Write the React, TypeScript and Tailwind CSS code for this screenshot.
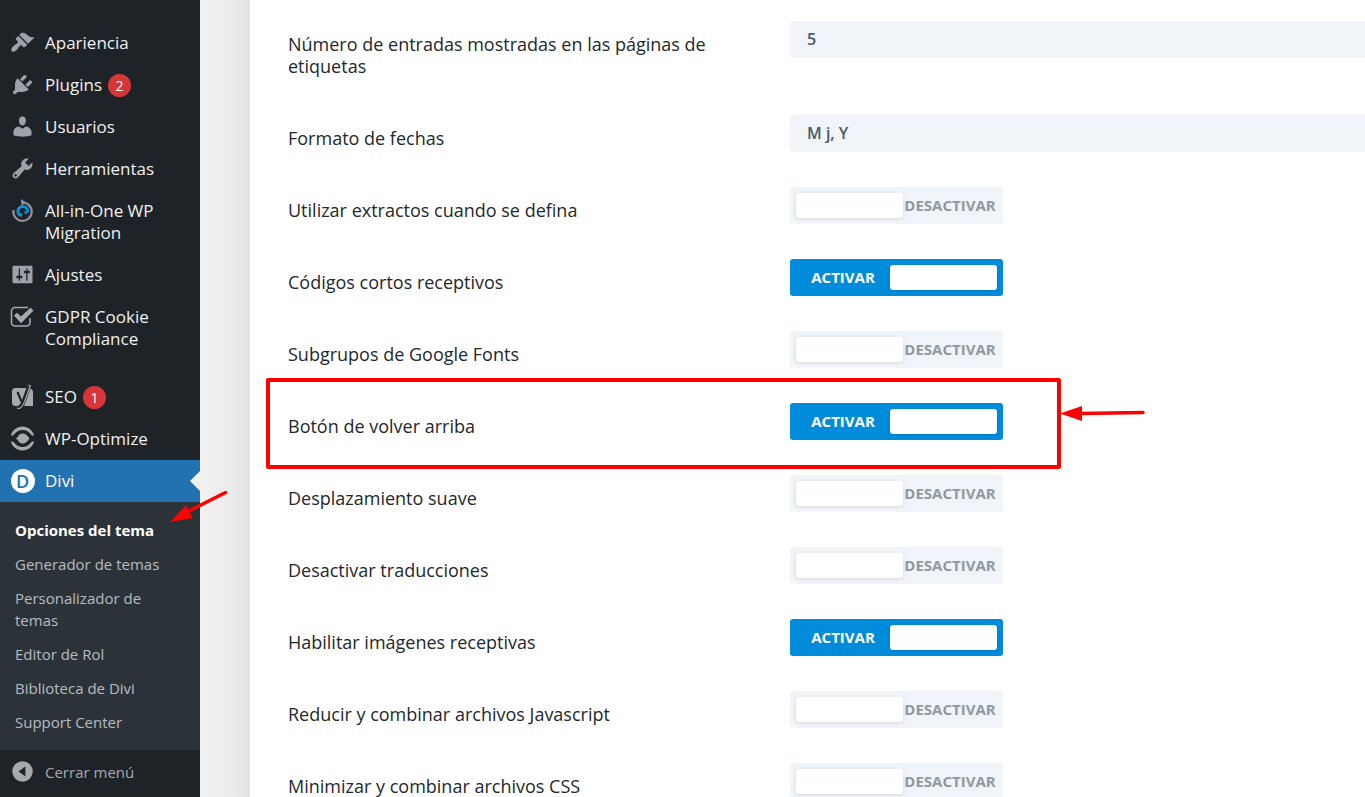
import React, { useState } from 'react';

interface MenuItem {
    label: string;
    icon: React.ReactNode;
    count?: number;
}

interface ToggleOption {
    id: string;
    label: string;
    enabled: boolean;
    highlighted?: boolean;
}

const Dashicon: React.FC<{ d: string }> = ({ d }) => (
    <svg viewBox="0 0 20 20" className="shrink-0 w-[25px] h-[25px]" fill="currentColor" aria-hidden="true">
        <path d={d} />
    </svg>
);

const MigrationIcon = () => (
    <svg viewBox="0 0 25 25" className="shrink-0 w-[25px] h-[25px]" fill="none" aria-hidden="true">
        <path d="M12.500 4.500A9.200 9.200 0 1 1 3.500 12" stroke="#8c9297" strokeWidth="2.200" />
        <path d="M11 1l5 3.500-4.500 3z" fill="#8c9297" />
        <path d="M10.500 17.500A4.800 4.800 0 1 1 17.500 14" stroke="#0f8fdc" strokeWidth="3" />
        <path d="M13.500 13.500h5l-2.500 3z" fill="#0f8fdc" />
        <path d="M8.500 15l4 .5-1 4z" fill="#0f8fdc" />
    </svg>
);

const CookieIcon = () => (
    <svg viewBox="0 0 25 25" className="shrink-0 w-[25px] h-[25px]" fill="none" aria-hidden="true">
        <path
            d="M18 3.500H5A3.500 3.500 0 0 0 1.500 7v11.500A3.500 3.500 0 0 0 5 22h11.500a3.500 3.500 0 0 0 3.500-3.500V14"
            stroke="#a7aaad"
            strokeWidth="1.500"
        />
        <path d="M4 11.500l3-2.700 4 3.800 9.500-8.800 3 2.800L11 19.200z" fill="#a7aaad" />
    </svg>
);

const YoastIcon = () => (
    <svg viewBox="0 0 25 25" className="shrink-0 w-[25px] h-[25px]" fill="none" aria-hidden="true">
        <path d="M5.500 4H17l-7 18H5.500A3.500 3.500 0 0 1 2 18.500v-11A3.500 3.500 0 0 1 5.500 4z" fill="#a7aaad" />
        <path d="M20.500 4.500Q23 5.500 23 8v14h-9z" fill="#a7aaad" />
        <path d="M19.500 1l-6.500 17c-1.300 3.600-2.800 5.600-6 6" stroke="#a7aaad" strokeWidth="3.500" />
        <path d="M18.500 1.500l-6 16.500c-1.200 3.200-2.700 4.800-5.200 5.200M7.500 8l4 9.500" stroke="#1d2327" strokeWidth="2.200" />
    </svg>
);

const OptimizeIcon = () => (
    <svg viewBox="0 0 25 25" className="shrink-0 w-[25px] h-[25px]" fill="none" aria-hidden="true">
        <path d="M.8 9.500C2.500 4 7 .5 12.500.5S22.500 4 24.200 9.500c-1.500.2-2.500-.2-3.700-1.500-2-2.500-4.800-4-8-4s-6 1.500-8 4C3.300 9.300 2.300 9.700.8 9.500z" fill="#a7aaad" />
        <path d="M.8 15.500C2.500 21 7 24.500 12.500 24.500S22.500 21 24.200 15.500c-1.500-.2-2.500.2-3.700 1.500-2 2.500-4.800 4-8 4s-6-1.500-8-4c-1.200-1.300-2.200-1.700-3.700-1.500z" fill="#a7aaad" />
        <path d="M.5 12.500h5c2.400 0 2.800-5 7-5 3.500 0 5.500 2.800 7 5h5-5c-1.500 2.200-3.500 5-7 5-4.200 0-4.600-5-7-5z" fill="#a7aaad" />
    </svg>
);

const DiviIcon = () => (
    <span className="flex items-center justify-center w-6 h-6 rounded-full bg-white text-[#2271b1] text-lg font-semibold leading-6" aria-hidden="true">
        D
    </span>
);

const CollapseIcon = () => (
    <svg viewBox="0 0 20 20" className="shrink-0 w-[25px] h-[25px]" aria-hidden="true">
        <circle cx="10" cy="10" r="8.200" fill="#a7aaad" />
        <path d="M12.300 6v8L6.800 10z" fill="#1d2327" />
    </svg>
);

const MAIN_MENU: MenuItem[] = [
    {
        label: 'Apariencia',
        icon: <Dashicon d="M14.48 11.06L7.41 3.99l1.5-1.5c.5-.56 2.3-.47 3.51.32 1.21.8 1.43 1.28 2.91 2.1 1.18.64 2.45 1.26 4.45.85zm-.71.71L6.7 4.7 4.93 6.47c-.39.39-.39 1.02 0 1.41l1.06 1.06c.39.39.39 1.03 0 1.42-.6.6-1.43 1.11-2.21 1.69-.35.26-.7.53-1.01.84C1.43 14.23.4 16.08 1.4 17.07c.99 1 2.84-.03 4.18-1.36.31-.31.58-.66.85-1.02.57-.78 1.08-1.61 1.69-2.21.39-.39 1.02-.39 1.41 0l1.06 1.06c.39.39 1.02.39 1.41 0z" />
    },
    {
        label: 'Plugins',
        count: 2,
        icon: <Dashicon d="M13.11 4.36L9.87 7.6 8 5.73l3.24-3.24c.35-.34 1.05-.2 1.56.32.52.51.66 1.21.31 1.55zm-8 1.77l.91-1.12 9.01 9.01-1.19.84c-.71.71-2.63 1.16-3.82 1.16H6.14L4.9 17.26c-.59.59-1.54.59-2.12 0-.59-.58-.59-1.53 0-2.12l1.24-1.24v-3.88c0-1.13.4-3.19 1.09-3.89zm7.26 3.97l3.24-3.24c.34-.35 1.04-.21 1.55.31.52.51.66 1.21.31 1.55l-3.24 3.25z" />
    },
    {
        label: 'Usuarios',
        icon: <Dashicon d="M10 9.25c-2.27 0-2.73-3.44-2.73-3.44C7 4.02 7.82 2 9.97 2c2.16 0 2.98 2.02 2.71 3.81 0 0-.41 3.44-2.68 3.44zm0 2.57L12.72 10c2.39 0 4.52 2.33 4.52 4.53v2.49s-3.65 1.13-7.24 1.13c-3.65 0-7.24-1.13-7.24-1.13v-2.49c0-2.25 1.94-4.48 4.47-4.48z" />
    },
    {
        label: 'Herramientas',
        icon: <Dashicon d="M16.68 9.77c-1.34 1.34-3.3 1.67-4.95.99l-5.41 6.52c-.99.99-2.59.99-3.58 0s-.99-2.59 0-3.57l6.52-5.42c-.68-1.65-.35-3.61.99-4.95 1.28-1.28 3.12-1.62 4.72-1.06l-2.89 2.89 2.82 2.82 2.86-2.87c.53 1.58.18 3.39-1.08 4.65zM3.81 16.21c.4.39 1.04.39 1.43 0 .4-.4.4-1.04 0-1.43-.39-.4-1.03-.4-1.43 0-.39.39-.39 1.03 0 1.43z" />
    },
    { label: 'All-in-One WP Migration', icon: <MigrationIcon /> },
    {
        label: 'Ajustes',
        icon: <Dashicon d="M18 16V4c0-.55-.45-1-1-1H3c-.55 0-1 .45-1 1v12c0 .55.45 1 1 1h14c.55 0 1-.45 1-1zM8 11h1c.55 0 1 .45 1 1s-.45 1-1 1H8v1.5c0 .28-.22.5-.5.5s-.5-.22-.5-.5V13H6c-.55 0-1-.45-1-1s.45-1 1-1h1V5.5c0-.28.22-.5.5-.5s.5.22.5.5V11zm5-2h-1c-.55 0-1-.45-1-1s.45-1 1-1h1V5.5c0-.28.22-.5.5-.5s.5.22.5.5V7h1c.55 0 1 .45 1 1s-.45 1-1 1h-1v5.5c0 .28-.22.5-.5.5s-.5-.22-.5-.5V9z" />
    },
    { label: 'GDPR Cookie Compliance', icon: <CookieIcon /> }
];

const PLUGIN_MENU: MenuItem[] = [
    { label: 'SEO', count: 1, icon: <YoastIcon /> },
    { label: 'WP-Optimize', icon: <OptimizeIcon /> }
];

const DIVI_SUBMENU = [
    'Generador de temas',
    'Personalizador de temas',
    'Editor de Rol',
    'Biblioteca de Divi',
    'Support Center'
];

const OPTIONS: ToggleOption[] = [
    { id: 'excerpts', label: 'Utilizar extractos cuando se defina', enabled: false },
    { id: 'shortcodes', label: 'Códigos cortos receptivos', enabled: true },
    { id: 'font-subsets', label: 'Subgrupos de Google Fonts', enabled: false },
    { id: 'back-to-top', label: 'Botón de volver arriba', enabled: true, highlighted: true },
    { id: 'smooth-scroll', label: 'Desplazamiento suave', enabled: false },
    { id: 'translations', label: 'Desactivar traducciones', enabled: false },
    { id: 'responsive-images', label: 'Habilitar imágenes receptivas', enabled: true },
    { id: 'minify-js', label: 'Reducir y combinar archivos Javascript', enabled: false },
    { id: 'minify-css', label: 'Minimizar y combinar archivos CSS', enabled: false }
];

const MenuLink: React.FC<{ item: MenuItem }> = ({ item }) => (
    <li>
        <a href="#" className="flex items-start py-[10px] text-[#f0f0f1] hover:text-[#72aee6]">
            <span className="flex items-center justify-center shrink-0 w-[45px] h-5 text-[#9ca2a7]">{item.icon}</span>
            <span className="w-[130px]">
                {item.label}
                {item.count !== undefined && (
                    <span className="inline-block ml-1.5 w-[23px] h-[23px] -my-1 rounded-full bg-[#d63638] text-white text-sm leading-[23px] text-center">
                        {item.count}
                    </span>
                )}
            </span>
        </a>
    </li>
);

const Sidebar = () => (
    <nav className="relative z-10 w-[200px] shrink-0 bg-[#1d2327] font-['Open_Sans',sans-serif] text-[17px] leading-[22px]">
        <ul className="pt-[22px]">
            {MAIN_MENU.map((item) => <MenuLink key={item.label} item={item} />)}
        </ul>
        <ul className="pt-4">
            {PLUGIN_MENU.map((item) => <MenuLink key={item.label} item={item} />)}
            <li>
                <a href="#" className="relative flex items-center h-[42px] bg-[#2271b1] text-white">
                    <span className="flex justify-center w-[45px]"><DiviIcon /></span>
                    Divi
                    <span className="absolute right-0 top-[11px] border-y-[10px] border-r-[10px] border-y-transparent border-r-[#f0f0f1]" />
                </a>
                <ul className="py-[11px] bg-[#2c3338] text-[15px] leading-[22px] text-[#b5bcc2]">
                    <li className="relative">
                        <a href="#" className="block px-[15px] py-[6px] font-bold text-white">Opciones del tema</a>
                        <svg viewBox="0 0 60 34" className="absolute left-[169px] -top-[23px] w-[60px] h-[34px] overflow-visible" aria-hidden="true">
                            <path d="M56.500 2.500L18 22" stroke="#fe0000" strokeWidth="3.500" strokeLinecap="round" />
                            <path d="M1 32l16-17 7 13z" fill="#fe0000" />
                        </svg>
                    </li>
                    {DIVI_SUBMENU.map((label) => (
                        <li key={label}>
                            <a href="#" className="block px-[15px] py-[6px] hover:text-[#72aee6]">{label}</a>
                        </li>
                    ))}
                </ul>
            </li>
        </ul>
        <button type="button" className="flex items-start w-full py-[11px] text-[15px] leading-[22px] text-[#a7aaad]">
            <span className="flex items-center justify-center w-[45px] h-5"><CollapseIcon /></span>
            Cerrar menú
        </button>
    </nav>
);

const Toggle: React.FC<{ id: string; initial: boolean }> = ({ id, initial }) => {
    const [on, setOn] = useState(initial);

    return (
        <button
            type="button"
            role="switch"
            aria-checked={on}
            aria-labelledby={`${id}-label`}
            onClick={() => setOn(!on)}
            className={`flex items-center w-[213px] h-[37px] px-[6px] rounded-[3px] text-[15px] leading-5 font-bold ${on
                ? 'bg-[#008bdb] text-white'
                : 'flex-row-reverse bg-[#f1f4f9] text-[#8f999f]'
                }`}
        >
            <span className="flex-1 pb-0.5 text-center">{on ? 'ACTIVAR' : 'DESACTIVAR'}</span>
            <span className="w-[107px] h-[25px] rounded-[3px] bg-white shadow-[0_1px_4px_rgba(0,0,0,0.12)]" />
        </button>
    );
};

const TextRow: React.FC<{ id: string; label: string; value: string }> = ({ id, label, value }) => (
    <div className="flex items-start">
        <label htmlFor={id} className="w-[502px] shrink-0 pt-3 pb-[38px] pr-12">{label}</label>
        <input
            id={id}
            type="text"
            defaultValue={value}
            className="flex-1 min-w-0 h-[37px] px-[17px] pb-0.5 rounded-l-[3px] bg-[#f1f4f9] text-base font-semibold text-[#4c5866] outline-none"
        />
    </div>
);

const ToggleRow: React.FC<{ option: ToggleOption }> = ({ option }) => (
    <div className="relative flex items-start">
        <span id={`${option.id}-label`} className="w-[502px] shrink-0 pt-3 pb-[38px] pr-12">{option.label}</span>
        <Toggle id={option.id} initial={option.enabled} />
        {option.highlighted && (
            <div className="absolute -left-[22px] -top-[25px] w-[795px] h-[91px] border-4 border-[#fe0000] rounded-[2px] pointer-events-none">
                <svg viewBox="0 0 86 18" className="absolute left-[790px] top-[22px] w-[86px] h-[18px]" aria-hidden="true">
                    <path d="M20 9.500L83 8.500" stroke="#fe0000" strokeWidth="3.500" strokeLinecap="round" />
                    <path d="M0 9.500L22 2v15z" fill="#fe0000" />
                </svg>
            </div>
        )}
    </div>
);

export default function App() {
    return (
        <div className="flex h-screen overflow-hidden bg-[#f0f0f1]">
            <Sidebar />
            <div className="w-[50px] shrink-0 bg-linear-to-r from-[#f0f0f1] from-10% via-[#ececec] via-60% to-[#e3e3e3]" />
            <main className="flex-1 min-w-0 bg-white pt-[21px] pl-[38px] font-['Open_Sans',sans-serif] text-lg leading-[22px] font-medium text-[#23282d]">
                <TextRow
                    id="tag-posts"
                    label="Número de entradas mostradas en las páginas de etiquetas"
                    value="5"
                />
                <TextRow id="date-format" label="Formato de fechas" value="M j, Y" />
                {OPTIONS.map((option) => <ToggleRow key={option.id} option={option} />)}
            </main>
        </div>
    );
}
